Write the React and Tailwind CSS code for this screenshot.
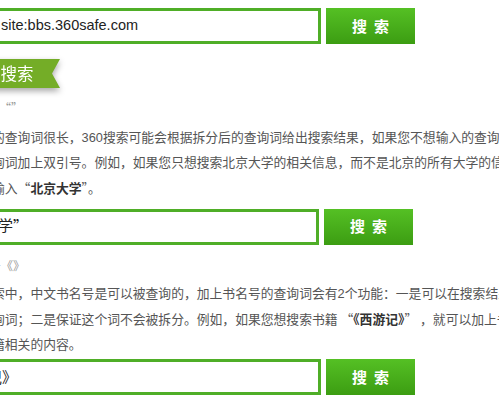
import React from "react";

function Btn({ ml }) {
  return (
    <button
      className={
        "shrink-0 w-[89px] h-[36px] bg-linear-to-b from-[#55c024] to-[#3c9d12] flex items-center justify-center gap-[7px] text-white text-[15px] font-bold font-['Noto_Sans_CJK_SC',sans-serif] " +
        ml
      }
    >
      <span>搜</span>
      <span>索</span>
    </button>
  );
}

export default function App() {
  return (
    <div className="w-[499px] h-[400px] overflow-hidden bg-white font-['Liberation_Sans','Noto_Sans_CJK_SC',sans-serif]">
      {/* row 1 */}
      <div className="flex items-start pt-[8px]">
        <div className="shrink-0 ml-[-60px] w-[381px] h-[36px] border-[3px] border-[#4fae27] bg-white flex items-center overflow-hidden pl-[58px] text-[14.5px] text-[#222] whitespace-nowrap">
          site:bbs.360safe.com
        </div>
        <Btn ml="ml-[5px]" />
      </div>

      {/* ribbon */}
      <div className="mt-[15px] w-[80px] ml-[-20px] drop-shadow-[0_3px_3px_rgba(0,0,0,0.35)]">
        <div className="w-[80px] h-[29px] bg-[#74ad27] [clip-path:polygon(0_0,100%_0,calc(100%-8px)_50%,100%_100%,0_100%)] flex items-center pl-[4px] text-white text-[16.5px] whitespace-nowrap font-['Noto_Sans_CJK_SC',sans-serif]">
          内搜索
        </div>
      </div>

      {/* heading quotes */}
      <div className="mt-[10px] h-[20px] leading-[20px] ml-[-37px] text-[12px] text-[#999] whitespace-nowrap font-['Noto_Sans_CJK_SC',sans-serif]">
        双引号“”
      </div>

      <div className="mt-[6.5px] ml-[-8px] leading-[25px] text-[12.8px] text-[#555] whitespace-nowrap">
        <div>的查询词很长，360搜索可能会根据拆分后的查询词给出搜索结果，如果您不想输入的查询词被拆分</div>
        <div>询词加上双引号。例如，如果您只想搜索北京大学的相关信息，而不是北京的所有大学的信息，您可以</div>
        <div>
          输入<span className="font-['Noto_Sans_CJK_SC',sans-serif]">“</span>
          <b className="text-[#333]">北京大学</b>
          <span className="font-['Noto_Sans_CJK_SC',sans-serif]">”</span>。
        </div>
      </div>

      {/* row 2 */}
      <div className="flex items-start mt-[8px]">
        <div className="shrink-0 ml-[-60px] w-[379px] h-[36px] border-[3px] border-[#4fae27] bg-white flex items-center overflow-hidden pl-[5px] text-[15px] text-[#222] whitespace-nowrap">
          “北京大学<span className="font-['Noto_Sans_CJK_SC',sans-serif]">”</span>
        </div>
        <Btn ml="ml-[5px]" />
      </div>

      {/* heading book marks */}
      <div className="mt-[11.5px] h-[20px] leading-[20px] ml-[-35px] text-[12px] text-[#999] whitespace-nowrap font-['Noto_Sans_CJK_SC',sans-serif]">
        书名号《》
      </div>

      <div className="mt-[4.5px] ml-[-8px] leading-[25px] text-[12.8px] text-[#555] whitespace-nowrap">
        <div>索中，中文书名号是可以被查询的，加上书名号的查询词会有2个功能：一是可以在搜索结果中</div>
        <div>
          询词；二是保证这个词不会被拆分。例如，如果您想搜索书籍
          <span className="font-['Noto_Sans_CJK_SC',sans-serif]"> “</span>
          <b className="text-[#333] font-['Noto_Sans_CJK_SC',sans-serif]">《西游记》</b>
          <span className="font-['Noto_Sans_CJK_SC',sans-serif]">” </span>，就可以加上书名号
        </div>
        <div>籍相关的内容。</div>
      </div>

      {/* row 3 */}
      <div className="flex items-start mt-[2.5px]">
        <div className="shrink-0 ml-[-60px] w-[381px] h-[36px] border-[3px] border-[#4fae27] bg-white flex items-center overflow-hidden text-[15px] text-[#222] whitespace-nowrap font-['Noto_Sans_CJK_SC',sans-serif]">
          <span className="ml-[-1px]">《西游记》</span>
        </div>
        <Btn ml="ml-[5px]" />
      </div>
    </div>
  );
}
